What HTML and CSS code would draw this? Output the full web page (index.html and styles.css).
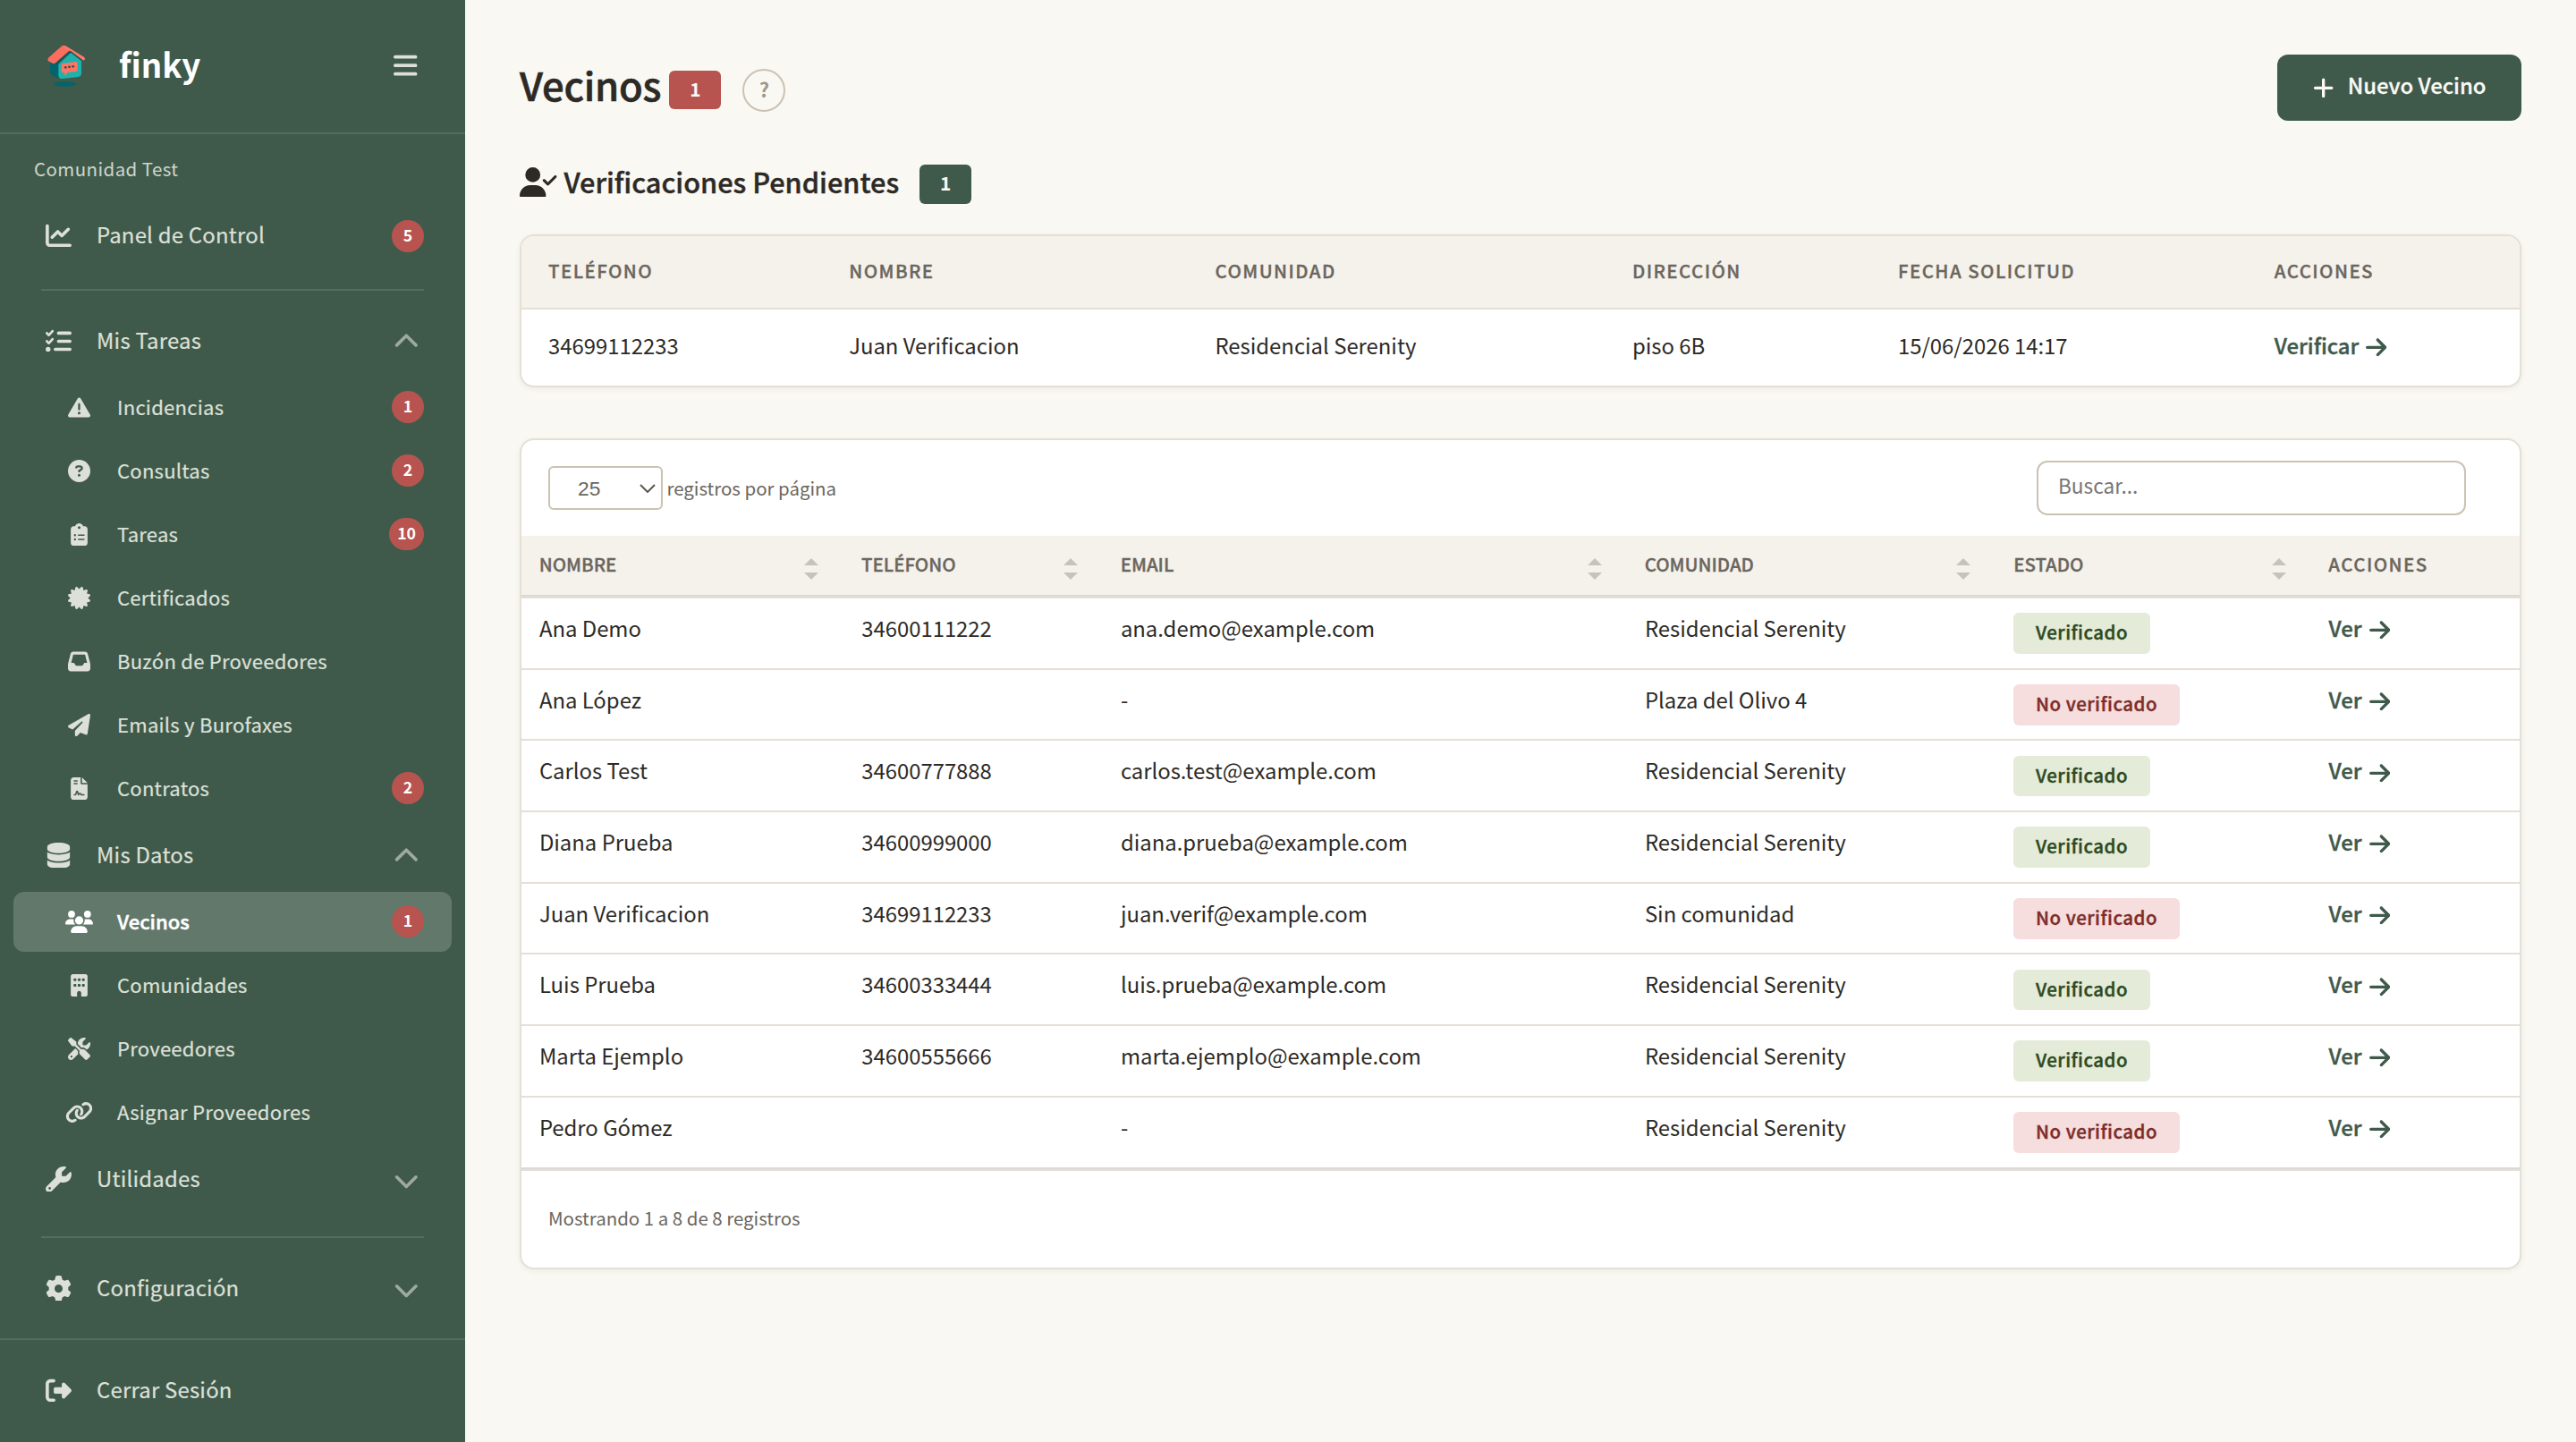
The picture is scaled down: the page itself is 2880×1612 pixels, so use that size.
FILE: index.html
```html
<!DOCTYPE html>
<html lang="es">
<head>
<meta charset="utf-8">
<title>Vecinos - finky</title>
<link rel="stylesheet" href="styles.css">
</head>
<body>
<svg class="sprite" width="0" height="0" aria-hidden="true">
  <symbol id="bars" viewBox="0 0 448 512"><path d="M0 96C0 78.300 14.300 64 32 64H416c17.700 0 32 14.300 32 32s-14.300 32-32 32H32C14.300 128 0 113.700 0 96zM0 256c0-17.700 14.300-32 32-32H416c17.700 0 32 14.300 32 32s-14.300 32-32 32H32c-17.700 0-32-14.300-32-32zM448 416c0 17.700-14.300 32-32 32H32c-17.700 0-32-14.300-32-32s14.300-32 32-32H416c17.700 0 32 14.300 32 32z"/></symbol>
  <symbol id="chart" viewBox="0 0 512 512"><path d="M64 64c0-17.700-14.300-32-32-32S0 46.300 0 64V400c0 44.200 35.800 80 80 80H480c17.700 0 32-14.300 32-32s-14.300-32-32-32H80c-8.800 0-16-7.200-16-16V64zm406.600 86.600c12.500-12.500 12.500-32.800 0-45.300s-32.800-12.500-45.300 0L320 210.700l-57.400-57.400c-12.500-12.500-32.800-12.500-45.300 0l-112 112c-12.500 12.500-12.500 32.800 0 45.300s32.800 12.500 45.300 0L240 221.300l57.400 57.400c12.500 12.500 32.800 12.500 45.300 0l128-128z"/></symbol>
  <symbol id="tasks" viewBox="0 0 512 512"><path d="M152.100 38.200c9.900 8.900 10.700 24 1.800 33.900l-72 80c-4.400 4.900-10.600 7.800-17.200 7.900s-12.900-2.400-17.600-7L7 113C-2.300 103.600-2.300 88.400 7 79s24.600-9.400 33.900 0l22.100 22.100 55.100-61.200c8.900-9.900 24-10.700 33.900-1.800zm0 160c9.900 8.900 10.700 24 1.800 33.900l-72 80c-4.400 4.900-10.600 7.800-17.200 7.900s-12.900-2.400-17.600-7L7 273c-9.400-9.400-9.400-24.600 0-33.900s24.600-9.400 33.900 0l22.100 22.100 55.100-61.200c8.900-9.900 24-10.700 33.900-1.800zM224 96c0-17.700 14.300-32 32-32H480c17.700 0 32 14.300 32 32s-14.300 32-32 32H256c-17.700 0-32-14.300-32-32zm0 160c0-17.700 14.300-32 32-32H480c17.700 0 32 14.300 32 32s-14.300 32-32 32H256c-17.700 0-32-14.300-32-32zM160 416c0-17.700 14.300-32 32-32H480c17.700 0 32 14.300 32 32s-14.300 32-32 32H192c-17.700 0-32-14.300-32-32zM48 368a48 48 0 1 1 0 96 48 48 0 1 1 0-96z"/></symbol>
  <symbol id="warning" viewBox="0 0 512 512"><path d="M256 32c14.200 0 27.300 7.500 34.500 19.800l216 368c7.300 12.400 7.300 27.700 .2 40.100S486.300 480 472 480H40c-14.300 0-27.600-7.700-34.700-20.100s-7-27.800 .2-40.100l216-368C228.700 39.500 241.800 32 256 32zm0 128c-13.300 0-24 10.700-24 24V296c0 13.300 10.700 24 24 24s24-10.700 24-24V184c0-13.300-10.700-24-24-24zm32 224a32 32 0 1 0 -64 0 32 32 0 1 0 64 0z"/></symbol>
  <symbol id="question" viewBox="0 0 512 512"><path d="M256 512A256 256 0 1 0 256 0a256 256 0 1 0 0 512zM169.800 165.300c7.900-22.300 29.100-37.300 52.800-37.300h58.300c34.900 0 63.100 28.300 63.100 63.100c0 22.600-12.100 43.500-31.700 54.800L280 264.400c-.2 13-10.900 23.600-24 23.600c-13.300 0-24-10.700-24-24V250.500c0-8.600 4.600-16.500 12.100-20.800l44.300-25.400c4.700-2.700 7.600-7.700 7.600-13.100c0-8.400-6.800-15.100-15.100-15.100H222.600c-3.400 0-6.400 2.100-7.500 5.300l-.4 1.200c-4.400 12.500-18.200 19-30.600 14.600s-19-18.200-14.600-30.600l.4-1.200zM224 352a32 32 0 1 1 64 0 32 32 0 1 1 -64 0z"/></symbol>
  <symbol id="clipboard" viewBox="0 0 384 512"><path d="M192 0c-41.800 0-77.400 26.700-90.500 64H64C28.700 64 0 92.700 0 128V448c0 35.300 28.700 64 64 64H320c35.300 0 64-28.700 64-64V128c0-35.300-28.700-64-64-64H282.500C269.400 26.700 233.800 0 192 0zm0 64a32 32 0 1 1 0 64 32 32 0 1 1 0-64zM72 272a24 24 0 1 1 48 0 24 24 0 1 1 -48 0zm104-16H304c8.800 0 16 7.200 16 16s-7.200 16-16 16H176c-8.800 0-16-7.200-16-16s7.200-16 16-16zM72 368a24 24 0 1 1 48 0 24 24 0 1 1 -48 0zm88 0c0-8.800 7.200-16 16-16H304c8.800 0 16 7.200 16 16s-7.200 16-16 16H176c-8.800 0-16-7.200-16-16z"/></symbol>
  <symbol id="certificate" viewBox="0 0 512 512"><path d="M211 7.300C205 1 196-1.400 187.600 .8s-14.900 8.900-17.100 17.300L154.700 80.600l-62-17.500c-8.400-2.400-17.400 0-23.500 6.100s-8.500 15.100-6.100 23.500l17.500 62L18.100 170.600c-8.400 2.100-15 8.700-17.300 17.100S1 205 7.300 211l46.200 45L7.300 301C1 307-1.400 316 .8 324.400s8.900 14.900 17.300 17.100l62.500 15.800-17.500 62c-2.400 8.400 0 17.400 6.100 23.500s15.100 8.500 23.500 6.100l62-17.500 15.800 62.500c2.100 8.400 8.700 15 17.100 17.300s17.300-.2 23.400-6.400l45-46.200 45 46.200c6.100 6.200 15 8.700 23.400 6.400s14.900-8.900 17.100-17.300l15.800-62.500 62 17.500c8.400 2.400 17.400 0 23.500-6.100s8.500-15.100 6.100-23.500l-17.500-62 62.500-15.800c8.400-2.100 15-8.700 17.300-17.100s-.2-17.400-6.400-23.400l-46.200-45 46.200-45c6.200-6.100 8.700-15 6.400-23.400s-8.900-14.900-17.300-17.100l-62.500-15.800 17.500-62c2.400-8.400 0-17.400-6.100-23.500s-15.100-8.500-23.500-6.100l-62 17.500L341.400 18.100c-2.100-8.400-8.700-15-17.100-17.300S307 1 301 7.300L256 53.500 211 7.300z"/></symbol>
  <symbol id="inbox" viewBox="0 0 512 512"><path d="M121 32C91.600 32 66 52 58.900 80.500L1.900 308.400C.6 313.500 0 318.700 0 323.900V416c0 35.300 28.700 64 64 64H448c35.300 0 64-28.700 64-64V323.900c0-5.200-.6-10.400-1.900-15.500l-57-227.900C446 52 420.400 32 391 32H121zm0 64H391l48 192H387.800c-12.100 0-23.200 6.800-28.600 17.700l-14.300 28.600c-5.400 10.800-16.500 17.700-28.600 17.700H195.800c-12.100 0-23.200-6.800-28.600-17.700l-14.300-28.600c-5.400-10.800-16.500-17.700-28.600-17.700H73L121 96z"/></symbol>
  <symbol id="plane" viewBox="0 0 512 512"><path d="M498.100 5.600c10.100 7 15.400 19.100 13.500 31.200l-64 416c-1.500 9.700-7.400 18.200-16 23s-18.900 5.400-28 1.600L284 427.700l-68.500 74.100c-8.900 9.700-22.900 12.900-35.200 8.100S160 493.200 160 480V396.400c0-4 1.500-7.800 4.200-10.700L331.800 202.800c5.800-6.300 5.600-16-.4-22s-15.700-6.400-22-.7L106 360.800 17.700 316.600C7.100 311.300 .3 300.700 0 288.900s5.900-22.800 16.100-28.700l448-256c10.700-6.100 23.900-5.500 34 1.400z"/></symbol>
  <symbol id="contract" viewBox="0 0 384 512"><path d="M64 0C28.700 0 0 28.700 0 64V448c0 35.300 28.700 64 64 64H320c35.300 0 64-28.700 64-64V160H256c-17.700 0-32-14.300-32-32V0H64zM256 0V128H384L256 0zM80 64h64c8.800 0 16 7.200 16 16s-7.200 16-16 16H80c-8.800 0-16-7.200-16-16s7.200-16 16-16zm0 64h64c8.800 0 16 7.200 16 16s-7.200 16-16 16H80c-8.800 0-16-7.200-16-16s7.200-16 16-16zm54.200 253.800c-6.100 20.300-24.800 34.200-46 34.200H80c-8.800 0-16-7.200-16-16s7.200-16 16-16h8.200c7.100 0 13.300-4.600 15.300-11.400l14.900-49.500c3.400-11.300 13.800-19.100 25.600-19.100s22.200 7.700 25.600 19.100l11.600 38.600c7.400-6.200 16.800-9.700 26.800-9.700c15.900 0 30.400 9 37.500 23.200l4.400 8.800H304c8.800 0 16 7.200 16 16s-7.200 16-16 16H240c-6.100 0-11.600-3.400-14.300-8.800l-8.800-17.700c-1.700-3.400-5.100-5.500-8.800-5.500s-7.200 2.100-8.800 5.500l-8.800 17.700c-2.900 5.900-9.200 9.400-15.700 8.800s-12.100-5.100-13.900-11.300L144 349l-9.800 32.800z"/></symbol>
  <symbol id="database" viewBox="0 0 448 512"><path d="M448 80v48c0 44.200-100.300 80-224 80S0 172.200 0 128V80C0 35.800 100.300 0 224 0S448 35.800 448 80zM393.200 214.700c20.800-7.400 39.900-16.900 54.800-28.600V288c0 44.200-100.300 80-224 80S0 332.200 0 288V186.100c14.900 11.800 34 21.200 54.800 28.600C99.700 230.700 159.500 240 224 240s124.300-9.300 169.200-25.300zM0 346.100c14.900 11.800 34 21.200 54.800 28.600C99.700 390.700 159.500 400 224 400s124.300-9.300 169.200-25.300c20.800-7.400 39.900-16.900 54.800-28.600V432c0 44.200-100.300 80-224 80S0 476.200 0 432V346.100z"/></symbol>
  <symbol id="users" viewBox="0 0 640 512"><path d="M144 0a80 80 0 1 1 0 160A80 80 0 1 1 144 0zM512 0a80 80 0 1 1 0 160A80 80 0 1 1 512 0zM0 298.700C0 239.800 47.800 192 106.700 192h42.700c15.900 0 31 3.500 44.600 9.700c-1.300 7.200-1.900 14.700-1.900 22.300c0 38.200 16.800 72.500 43.300 96c-.2 0-.4 0-.7 0H21.300C9.600 320 0 310.400 0 298.700zM405.300 320c-.2 0-.4 0-.7 0c26.600-23.500 43.300-57.800 43.300-96c0-7.600-.7-15-1.900-22.300c13.600-6.300 28.700-9.700 44.600-9.700h42.700C592.200 192 640 239.800 640 298.700c0 11.800-9.600 21.300-21.300 21.300H405.300zM224 224a96 96 0 1 1 192 0 96 96 0 1 1 -192 0zM128 485.300C128 411.700 187.700 352 261.300 352H378.700C452.300 352 512 411.700 512 485.300c0 14.700-11.900 26.700-26.700 26.700H154.700c-14.700 0-26.700-11.900-26.700-26.700z"/></symbol>
  <symbol id="building" viewBox="0 0 384 512"><path fill-rule="evenodd" d="M48 0C21.500 0 0 21.500 0 48V464c0 26.500 21.500 48 48 48h96V432c0-26.500 21.500-48 48-48s48 21.500 48 48v80h96c26.500 0 48-21.500 48-48V48c0-26.500-21.500-48-48-48H48zM80 224h32c8.800 0 16 7.200 16 16v32c0 8.800-7.200 16-16 16H80c-8.800 0-16-7.200-16-16V240c0-8.800 7.200-16 16-16zM176 224h32c8.800 0 16 7.200 16 16v32c0 8.800-7.200 16-16 16H176c-8.800 0-16-7.200-16-16V240c0-8.800 7.200-16 16-16zM272 224h32c8.800 0 16 7.200 16 16v32c0 8.800-7.200 16-16 16H272c-8.800 0-16-7.200-16-16V240c0-8.800 7.200-16 16-16zM80 96h32c8.800 0 16 7.200 16 16v32c0 8.800-7.200 16-16 16H80c-8.800 0-16-7.200-16-16V112c0-8.800 7.200-16 16-16zM176 96h32c8.800 0 16 7.200 16 16v32c0 8.800-7.200 16-16 16H176c-8.800 0-16-7.200-16-16V112c0-8.800 7.200-16 16-16zM272 96h32c8.800 0 16 7.200 16 16v32c0 8.800-7.200 16-16 16H272c-8.800 0-16-7.200-16-16V112c0-8.800 7.200-16 16-16z"/></symbol>
  <symbol id="tools" viewBox="0 0 512 512"><path d="M78.600 5C69.100-2.400 55.600-1.500 47 7L7 47c-8.500 8.500-9.400 22-2.100 31.600l80 104c4.500 5.900 11.600 9.400 19 9.400h54.100l109 109c-14.700 29-10 65.400 14.300 89.600l112 112c12.500 12.500 32.800 12.500 45.300 0l64-64c12.500-12.500 12.500-32.800 0-45.300l-112-112c-24.200-24.200-60.600-29-89.600-14.300l-109-109V104c0-7.500-3.500-14.500-9.400-19L78.600 5zM19.900 396.100C7.200 408.800 0 426.100 0 444.100C0 481.600 30.400 512 67.900 512c18 0 35.300-7.200 48-19.900L233.700 374.300c-7.800-20.900-9-43.600-3.600-65.100l-61.700-61.700L19.900 396.100zM512 144c0-10.500-1.100-20.700-3.200-30.500c-2.400-11.200-16.100-14.100-24.200-6l-63.900 63.900c-3 3-7.100 4.700-11.300 4.700H352c-8.800 0-16-7.200-16-16V102.600c0-4.200 1.700-8.300 4.700-11.300l63.900-63.900c8.100-8.100 5.200-21.800-6-24.200C388.700 1.100 378.500 0 368 0C288.500 0 224 64.500 224 144l0 .8 85.300 85.300c36-9.100 75.800 .5 104 28.700L429 274.500c49-23 83-72.800 83-130.500zM56 432a24 24 0 1 1 48 0 24 24 0 1 1 -48 0z"/></symbol>
  <symbol id="link" viewBox="0 0 640 512"><path d="M579.800 267.700c56.500-56.500 56.500-148 0-204.500c-50-50-128.800-56.500-186.300-15.400l-1.600 1.100c-14.400 10.300-17.700 30.300-7.400 44.600s30.300 17.700 44.600 7.400l1.600-1.100c32.100-22.900 76-19.300 103.800 8.600c31.500 31.500 31.500 82.500 0 114L422.300 334.800c-31.500 31.500-82.500 31.500-114 0c-27.900-27.900-31.500-71.800-8.600-103.800l1.100-1.600c10.300-14.400 6.900-34.400-7.400-44.600s-34.400-6.900-44.600 7.400l-1.100 1.600C206.500 251.200 213 330 263 380c56.500 56.500 148 56.500 204.500 0L579.800 267.700zM60.200 244.300c-56.500 56.500-56.500 148 0 204.500c50 50 128.800 56.500 186.300 15.400l1.600-1.100c14.400-10.300 17.700-30.300 7.400-44.600s-30.300-17.700-44.600-7.400l-1.600 1.100c-32.100 22.900-76 19.300-103.800-8.600C74 372 74 321 105.500 289.500L217.700 177.200c31.500-31.500 82.500-31.500 114 0c27.900 27.900 31.500 71.800 8.600 103.900l-1.100 1.600c-10.300 14.400-6.900 34.400 7.400 44.600s34.400 6.900 44.600-7.400l1.100-1.600C433.500 260.800 427 182 377 132c-56.500-56.500-148-56.500-204.500 0L60.200 244.300z"/></symbol>
  <symbol id="wrench" viewBox="0 0 512 512"><path d="M352 320c88.400 0 160-71.600 160-160c0-15.300-2.200-30.100-6.200-44.200c-3.100-10.800-16.400-13.200-24.300-5.300l-76.800 76.800c-3 3-7.100 4.700-11.300 4.700H336c-8.800 0-16-7.200-16-16V118.600c0-4.200 1.700-8.300 4.700-11.300l76.800-76.800c7.900-7.900 5.400-21.200-5.300-24.300C382.100 2.200 367.300 0 352 0C263.600 0 192 71.600 192 160c0 19.100 3.400 37.500 9.500 54.500L19.900 396.100C7.200 408.800 0 426.100 0 444.100C0 481.600 30.400 512 67.900 512c18 0 35.300-7.200 48-19.900L297.500 310.500c17 6.200 35.400 9.500 54.500 9.500zM80 408a24 24 0 1 1 0 48 24 24 0 1 1 0-48z"/></symbol>
  <symbol id="gear" viewBox="0 0 512 512"><path d="M495.900 166.600c3.200 8.700 .5 18.400-6.400 24.600l-43.300 39.400c1.100 8.300 1.700 16.800 1.700 25.400s-.6 17.100-1.700 25.400l43.300 39.400c6.900 6.200 9.600 15.900 6.400 24.600c-4.400 11.900-9.700 23.300-15.800 34.300l-4.700 8.100c-6.600 11-14 21.400-22.100 31.200c-5.900 7.200-15.700 9.600-24.500 6.800l-55.700-17.700c-13.400 10.300-28.200 18.900-44 25.400l-12.500 57.100c-2 9.100-9 16.300-18.200 17.800c-13.800 2.300-28 3.500-42.500 3.500s-28.700-1.200-42.500-3.500c-9.200-1.500-16.200-8.700-18.200-17.800l-12.500-57.100c-15.800-6.500-30.600-15.100-44-25.400L83.100 425.900c-8.800 2.800-18.600 .3-24.500-6.800c-8.100-9.800-15.500-20.200-22.100-31.200l-4.700-8.100c-6.100-11-11.400-22.400-15.800-34.300c-3.200-8.700-.5-18.400 6.400-24.600l43.300-39.400C64.600 273.100 64 264.600 64 256s.6-17.100 1.700-25.400L22.400 191.200c-6.900-6.200-9.600-15.900-6.400-24.600c4.400-11.900 9.700-23.300 15.800-34.300l4.700-8.100c6.600-11 14-21.400 22.100-31.200c5.900-7.200 15.700-9.600 24.500-6.800l55.700 17.700c13.400-10.300 28.200-18.900 44-25.400l12.500-57.100c2-9.100 9-16.300 18.200-17.800C227.300 1.200 241.500 0 256 0s28.700 1.200 42.500 3.500c9.200 1.500 16.200 8.700 18.200 17.800l12.500 57.100c15.800 6.500 30.600 15.100 44 25.400l55.700-17.700c8.800-2.800 18.600-.3 24.500 6.800c8.100 9.800 15.500 20.200 22.100 31.200l4.700 8.100c6.100 11 11.400 22.400 15.800 34.300zM256 336a80 80 0 1 0 0-160 80 80 0 1 0 0 160z"/></symbol>
  <symbol id="logout" viewBox="0 0 512 512"><path d="M377.900 105.900L500.700 228.700c7.200 7.200 11.300 17.100 11.300 27.300s-4.100 20.100-11.300 27.300L377.900 406.100c-6.400 6.400-15 9.900-24 9.900c-18.700 0-33.900-15.200-33.900-33.900l0-62.100-128 0c-17.700 0-32-14.300-32-32l0-64c0-17.700 14.300-32 32-32l128 0 0-62.100c0-18.700 15.200-33.900 33.900-33.900c9 0 17.600 3.600 24 9.900zM160 96L96 96c-17.700 0-32 14.300-32 32l0 256c0 17.700 14.300 32 32 32l64 0c17.700 0 32 14.300 32 32s-14.300 32-32 32l-64 0c-53 0-96-43-96-96L0 128C0 75 43 32 96 32l64 0c17.700 0 32 14.300 32 32s-14.300 32-32 32z"/></symbol>
  <symbol id="down" viewBox="0 0 512 512"><path d="M233.400 406.600c12.500 12.500 32.800 12.500 45.300 0l192-192c12.500-12.500 12.500-32.800 0-45.300s-32.800-12.500-45.300 0L256 338.700 86.600 169.400c-12.500-12.500-32.800-12.500-45.300 0s-12.500 32.800 0 45.300l192 192z"/></symbol>
  <symbol id="usercheck" viewBox="0 0 640 512"><path d="M96 128a128 128 0 1 1 256 0A128 128 0 1 1 96 128zM0 482.300C0 383.800 79.800 304 178.300 304h91.400C368.200 304 448 383.800 448 482.300c0 16.400-13.300 29.700-29.700 29.700H29.700C13.300 512 0 498.700 0 482.300zM625 177L497 305c-9.400 9.400-24.600 9.400-33.900 0l-64-64c-9.400-9.400-9.400-24.600 0-33.900s24.600-9.400 33.900 0l47 47L591 143c9.400-9.400 24.600-9.400 33.900 0s9.400 24.600 0 33.900z"/></symbol>
  <symbol id="plus" viewBox="0 0 448 512"><path d="M256 80c0-17.700-14.300-32-32-32s-32 14.300-32 32V224H48c-17.700 0-32 14.300-32 32s14.300 32 32 32H192V432c0 17.700 14.300 32 32 32s32-14.300 32-32V288H400c17.700 0 32-14.300 32-32s-14.300-32-32-32H256V80z"/></symbol>
  <symbol id="arrow" viewBox="0 0 448 512"><path d="M438.600 278.600c12.500-12.500 12.500-32.800 0-45.300l-160-160c-12.500-12.500-32.800-12.500-45.300 0s-12.500 32.800 0 45.300L338.800 224 32 224c-17.700 0-32 14.300-32 32s14.300 32 32 32l306.700 0L233.400 393.400c-12.500 12.500-12.500 32.800 0 45.300s32.800 12.500 45.300 0l160-160z"/></symbol>
  <symbol id="sort" viewBox="0 0 16 24"><path d="M8 0L16 8H0zM0 16H16L8 24z"/></symbol>
</svg>

<aside class="sidebar">
  <header class="brand">
    <svg class="logo" viewBox="0 0 210 195">
      <ellipse cx="98" cy="162" rx="38" ry="8.500" fill="#03646c"/>
      <path d="M48 86L64 94L78 86V142Q50 134 48 122z" fill="#04636c"/>
      <path d="M118 56L153 84V126Q153 136 142 138L88 144Q76 144 76 132V96z" fill="#1fb2ac"/>
      <path d="M90 93Q86 93 86 98V118Q86 124 92 124L96 124L98 133L107 123L134 120Q140 119 140 114V92Q140 86 134 87z" fill="#fd7565"/>
      <g fill="#334f4c"><circle cx="100" cy="106" r="4.200"/><circle cx="112.500" cy="104.500" r="4.200"/><circle cx="125" cy="103" r="4.200"/></g>
      <path d="M66 95L117 53L154 82" stroke="#0c555b" stroke-width="4" fill="none"/>
      <path d="M42 74L86 35Q91 31 97 33L117 46L66 91Q61 95 56 92L42 85Q38 80 42 74z" fill="#fb6d5e"/>
      <path d="M92 34Q98 32 104 36L162 71Q168 77 163 81Q161 83 156 80L118 52L100 46z" fill="#fd7868"/>
    </svg>
    <span class="brand-name">finky</span>
    <svg class="burger"><use href="#bars"/></svg>
  </header>

  <nav class="nav">
    <p class="community">Comunidad Test</p>
    <a class="item"><svg class="icon"><use href="#chart"/></svg><span class="label">Panel de Control</span><span class="count">5</span></a>
    <hr class="rule">
    <a class="item"><svg class="icon"><use href="#tasks"/></svg><span class="label">Mis Tareas</span><svg class="chev up"><use href="#down"/></svg></a>
    <a class="sub"><svg class="icon"><use href="#warning"/></svg><span class="label">Incidencias</span><span class="count">1</span></a>
    <a class="sub"><svg class="icon"><use href="#question"/></svg><span class="label">Consultas</span><span class="count">2</span></a>
    <a class="sub"><svg class="icon"><use href="#clipboard"/></svg><span class="label">Tareas</span><span class="count">10</span></a>
    <a class="sub"><svg class="icon"><use href="#certificate"/></svg><span class="label">Certificados</span></a>
    <a class="sub"><svg class="icon"><use href="#inbox"/></svg><span class="label">Buzón de Proveedores</span></a>
    <a class="sub"><svg class="icon"><use href="#plane"/></svg><span class="label">Emails y Burofaxes</span></a>
    <a class="sub"><svg class="icon"><use href="#contract"/></svg><span class="label">Contratos</span><span class="count">2</span></a>
    <a class="item"><svg class="icon"><use href="#database"/></svg><span class="label">Mis Datos</span><svg class="chev up"><use href="#down"/></svg></a>
    <a class="sub active"><svg class="icon"><use href="#users"/></svg><span class="label">Vecinos</span><span class="count">1</span></a>
    <a class="sub"><svg class="icon"><use href="#building"/></svg><span class="label">Comunidades</span></a>
    <a class="sub"><svg class="icon"><use href="#tools"/></svg><span class="label">Proveedores</span></a>
    <a class="sub"><svg class="icon"><use href="#link"/></svg><span class="label">Asignar Proveedores</span></a>
    <a class="item"><svg class="icon"><use href="#wrench"/></svg><span class="label">Utilidades</span><svg class="chev"><use href="#down"/></svg></a>
    <hr class="rule rule-low">
    <a class="item"><svg class="icon"><use href="#gear"/></svg><span class="label">Configuración</span><svg class="chev"><use href="#down"/></svg></a>
  </nav>

  <footer class="logout">
    <a class="item"><svg class="icon"><use href="#logout"/></svg><span class="label">Cerrar Sesión</span></a>
  </footer>
</aside>

<main class="main">
  <header class="page-head">
    <h1 class="title">Vecinos</h1>
    <span class="tag tag-red">1</span>
    <span class="help">?</span>
    <a class="btn"><svg class="btn-icon"><use href="#plus"/></svg><span class="btn-text">Nuevo Vecino</span></a>
  </header>

  <div class="section-head">
    <svg class="section-icon"><use href="#usercheck"/></svg>
    <h2 class="section-title">Verificaciones Pendientes</h2>
    <span class="tag tag-green">1</span>
  </div>

  <table class="card pending">
    <thead><tr><th>TELÉFONO</th><th>NOMBRE</th><th>COMUNIDAD</th><th>DIRECCIÓN</th><th>FECHA SOLICITUD</th><th>ACCIONES</th></tr></thead>
    <tbody><tr><td>34699112233</td><td>Juan Verificacion</td><td>Residencial Serenity</td><td>piso 6B</td><td>15/06/2026 14:17</td><td><a class="action">Verificar<svg class="arrow"><use href="#arrow"/></svg></a></td></tr></tbody>
  </table>

  <section class="card listing">
    <div class="toolbar">
      <span class="select">25<svg class="select-arrow" viewBox="0 0 18 10"><path d="M1 1L9 9L17 1" fill="none" stroke="#5c574f" stroke-width="2"/></svg></span>
      <span class="per-page">registros por página</span>
      <input class="search" type="search" placeholder="Buscar...">
    </div>
    <table class="neighbours">
      <thead><tr>
        <th>NOMBRE<svg class="sort"><use href="#sort"/></svg></th>
        <th>TELÉFONO<svg class="sort"><use href="#sort"/></svg></th>
        <th>EMAIL<svg class="sort"><use href="#sort"/></svg></th>
        <th>COMUNIDAD<svg class="sort"><use href="#sort"/></svg></th>
        <th>ESTADO<svg class="sort"><use href="#sort"/></svg></th>
        <th class="plain">ACCIONES</th>
      </tr></thead>
      <tbody>
        <tr><td>Ana Demo</td><td>34600111222</td><td>ana.demo@example.com</td><td>Residencial Serenity</td><td><span class="state ok">Verificado</span></td><td><a class="action">Ver<svg class="arrow"><use href="#arrow"/></svg></a></td></tr>
        <tr><td>Ana López</td><td></td><td>-</td><td>Plaza del Olivo 4</td><td><span class="state no">No verificado</span></td><td><a class="action">Ver<svg class="arrow"><use href="#arrow"/></svg></a></td></tr>
        <tr><td>Carlos Test</td><td>34600777888</td><td>carlos.test@example.com</td><td>Residencial Serenity</td><td><span class="state ok">Verificado</span></td><td><a class="action">Ver<svg class="arrow"><use href="#arrow"/></svg></a></td></tr>
        <tr><td>Diana Prueba</td><td>34600999000</td><td>diana.prueba@example.com</td><td>Residencial Serenity</td><td><span class="state ok">Verificado</span></td><td><a class="action">Ver<svg class="arrow"><use href="#arrow"/></svg></a></td></tr>
        <tr><td>Juan Verificacion</td><td>34699112233</td><td>juan.verif@example.com</td><td>Sin comunidad</td><td><span class="state no">No verificado</span></td><td><a class="action">Ver<svg class="arrow"><use href="#arrow"/></svg></a></td></tr>
        <tr><td>Luis Prueba</td><td>34600333444</td><td>luis.prueba@example.com</td><td>Residencial Serenity</td><td><span class="state ok">Verificado</span></td><td><a class="action">Ver<svg class="arrow"><use href="#arrow"/></svg></a></td></tr>
        <tr><td>Marta Ejemplo</td><td>34600555666</td><td>marta.ejemplo@example.com</td><td>Residencial Serenity</td><td><span class="state ok">Verificado</span></td><td><a class="action">Ver<svg class="arrow"><use href="#arrow"/></svg></a></td></tr>
        <tr><td>Pedro Gómez</td><td></td><td>-</td><td>Residencial Serenity</td><td><span class="state no">No verificado</span></td><td><a class="action">Ver<svg class="arrow"><use href="#arrow"/></svg></a></td></tr>
      </tbody>
    </table>
    <p class="summary">Mostrando 1 a 8 de 8 registros</p>
  </section>
</main>
</body>
</html>
```
FILE: styles.css
```css
* { box-sizing: border-box; }

body {
  margin: 0;
  display: flex;
  height: 1612px;
  overflow: hidden;
  background: #f9f8f3;
  color: #2d2a26;
  font-family: "Noto Sans CJK SC", "Noto Sans", sans-serif;
  font-size: 23.860px;
  line-height: 36px;
}

.sprite { position: absolute; }
svg { display: block; flex: none; fill: currentColor; }
h1, h2, p { margin: 0; }

/* Sidebar */
.sidebar {
  flex: none;
  display: flex;
  flex-direction: column;
  width: 520px;
  background: #3f5a4b;
  color: #dde0d8;
}

.brand {
  display: flex;
  align-items: center;
  height: 150px;
  padding: 0 53px 1px 40px;
  border-bottom: 2px solid #546c5e;
}
.logo { width: 70px; height: 65px; margin-bottom: 2px; }
.brand-name {
  flex: 1;
  margin-left: 23px;
  padding-bottom: 4px;
  color: #fff;
  font-size: 36.600px;
  font-weight: 700;
  line-height: 50px;
}
.burger { width: 26.600px; height: 30.400px; }

.nav { flex: 1; padding: 22.800px 15px 0; }
.community {
  margin: 0 0 23.200px 23px;
  font-size: 20.450px;
  line-height: 30px;
  letter-spacing: 0.450px;
  opacity: 0.92;
}

.item, .sub {
  display: flex;
  align-items: center;
  margin-bottom: 4px;
  padding-right: 31px;
  border-radius: 12px;
  letter-spacing: 0.240px;
}
.item { height: 74px; padding-left: 36px; font-size: 23.860px; }
.sub { height: 67px; padding-left: 58px; font-size: 22.050px; }
.item .icon { width: 29px; height: 28.900px; margin-right: 28px; }
.sub .icon { width: 31px; height: 25px; margin-right: 27px; }
.label { flex: 1; padding-bottom: 2px; -webkit-text-stroke: 0.200px; }
.count {
  min-width: 36px;
  height: 36px;
  padding: 0 9px;
  border-radius: 18px;
  background: #b8544f;
  color: #fff;
  font-size: 17.700px;
  font-weight: 700;
  line-height: 32px;
  letter-spacing: 0;
  text-align: center;
}
.item .count { margin-top: 3px; }
.chev { width: 28.600px; height: 28.600px; margin: 3px 5.700px 0 0; opacity: 0.6; }
.chev.up { transform: rotate(180deg); margin-top: 2px; }
.active { background: #61786b; color: #fff; letter-spacing: 0; }
.active .label { font-weight: 500; -webkit-text-stroke: 0.500px; }

.rule {
  height: 2px;
  margin: 23px 31px 19px;
  border: 0;
  background: #566e60;
}
.rule-low { margin-top: 27px; }

.logout {
  height: 116px;
  padding: 19px 15px 0;
  border-top: 2px solid #546c5e;
}

/* Main column */
.main { flex: 1; padding: 61px 61px 0; }

.page-head { display: flex; align-items: center; height: 74px; }
.title {
  padding-bottom: 9px;
  font-size: 43.600px;
  font-weight: 500;
  line-height: 60px;
  letter-spacing: -0.200px;
  -webkit-text-stroke: 0.600px;
}
.tag {
  width: 58px;
  height: 44px;
  border-radius: 6px;
  color: #faf9f4;
  font-size: 20.800px;
  font-weight: 700;
  line-height: 41px;
  text-align: center;
}
.tag-red { height: 43px; margin: 5px 0 0 9px; background: #b8544f; }
.tag-green { margin-left: 23px; background: #3f5a4b; }
.help {
  width: 48px;
  height: 48px;
  margin: 6px 0 0 24px;
  border: 2px solid #cbc2b2;
  border-radius: 50%;
  color: #a09789;
  font-size: 22px;
  font-weight: 700;
  line-height: 41px;
  text-align: center;
}
.btn {
  display: flex;
  align-items: center;
  width: 273px;
  height: 74px;
  margin-left: auto;
  padding-left: 40px;
  border-radius: 12px;
  background: #3f5a4b;
  color: #faf9f4;
  font-weight: 500;
  -webkit-text-stroke: 0.300px;
}
.btn-icon { width: 23.300px; height: 26.600px; margin-right: 15.500px; }
.btn-text { padding-bottom: 7px; }

.section-head { display: flex; align-items: center; height: 48px; margin: 47px 0 32px; }
.section-icon { width: 42px; height: 33.600px; margin: 0 7.400px 5px 0; }
.section-title {
  padding-bottom: 7px;
  font-size: 30.700px;
  font-weight: 500;
  line-height: 41px;
  -webkit-text-stroke: 0.400px;
}

.card {
  border: 2px solid #e5e0d5;
  border-radius: 16px;
  background: #fff;
  box-shadow: 0 2px 6px rgba(45, 42, 38, 0.06);
  overflow: hidden;
}

table, thead, tbody { display: block; }
tr { display: grid; }
th, td { display: block; padding: 0; text-align: left; white-space: nowrap; }
th { color: #6b665e; font-size: 20.450px; font-weight: 500; -webkit-text-stroke: 0.350px; }

.pending tr { grid-template-columns: 336.200px 409.300px 466.500px 297px 420.800px 1fr; align-items: center; }
.pending th, .pending td { padding-left: 30px; }
.pending thead { background: #f5f2eb; }
.pending thead tr { height: 82px; padding-bottom: 4px; border-bottom: 2px solid #e5e0d5; }
.pending th { letter-spacing: 1.450px; }
.pending tbody tr { height: 84.500px; padding-bottom: 5px; }

.action {
  display: flex;
  align-items: center;
  color: #3f5a4b;
  font-weight: 500;
  -webkit-text-stroke: 0.400px;
}
.arrow { width: 23.300px; height: 26.600px; margin: 5px 0 0 8px; }

.listing { height: 928.700px; margin-top: 57.500px; }
.toolbar { display: flex; align-items: center; height: 107px; padding: 0 60px 0 30px; }
.select {
  display: flex;
  align-items: center;
  justify-content: space-between;
  width: 128px;
  height: 49px;
  padding: 0 6px 0 31px;
  border: 2px solid #cbc2b2;
  border-radius: 6px;
  color: #6b665e;
  font-family: "Liberation Sans", sans-serif;
  font-size: 22.800px;
}
.select-arrow { width: 18px; height: 10px; }
.per-page { margin-left: 4.500px; padding-bottom: 1px; color: #6b665e; font-size: 20.450px; }
.search {
  width: 480px;
  height: 61px;
  margin-left: auto;
  padding: 0 22px 6px;
  border: 2px solid #cbc2b2;
  border-radius: 12px;
  outline: none;
  background: #fff;
  font: inherit;
  font-size: 22.600px;
  appearance: none;
}
.search::placeholder { color: #757575; }

.neighbours tr { grid-template-columns: 360.300px 289.700px 586px 412.500px 352.200px 1fr; }
.neighbours thead { background: #f5f2eb; }
.neighbours thead tr { height: 68px; border-bottom: 2px solid #d9d9d9; }
.neighbours th {
  display: flex;
  justify-content: space-between;
  align-items: center;
  padding: 0 28px 4px 19.700px;
}
.neighbours .plain { letter-spacing: 1.450px; }
.sort { width: 16px; height: 24px; margin-top: 12px; color: #c6c3bb; stroke: none; }

.neighbours tbody { border-top: 2px solid #e5e0d5; border-bottom: 2px solid #d9d9d9; }
.neighbours tbody tr { height: 79.700px; border-bottom: 2px solid #e5e0d5; }
.neighbours tbody tr:last-child { height: 78.100px; border-bottom: 0; }
.neighbours td { padding: 15px 0 0 19.900px; }
.state {
  display: inline-block;
  height: 45.700px;
  margin-top: 1.200px;
  padding: 0 24.600px;
  border-radius: 6px;
  font-size: 20.450px;
  font-weight: 500;
  line-height: 42px;
  letter-spacing: 0.500px;
  -webkit-text-stroke: 0.400px;
}
.ok { background: #e4ebd9; color: #2d4a22; }
.no { background: #f5dedd; color: #7f2d2b; }

.summary {
  padding: 36.800px 0 0 30px;
  border-top: 2px solid #e5e0d5;
  color: #6b665e;
  font-size: 20.450px;
  line-height: 30px;
}
```
